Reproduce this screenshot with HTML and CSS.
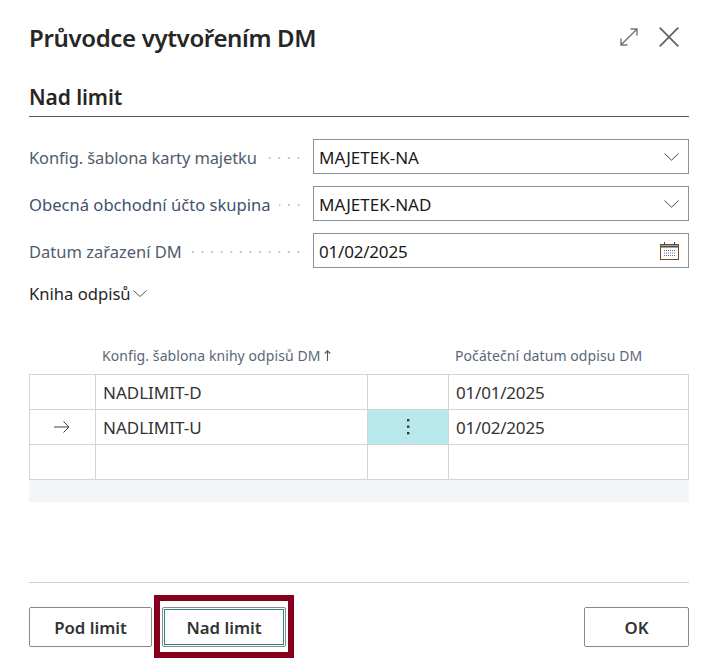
FILE: index.html
```html
<!DOCTYPE html>
<html lang="cs">
<head>
<meta charset="utf-8">
<title>Průvodce vytvořením DM</title>
<link rel="stylesheet" href="styles.css">
</head>
<body>
<main class="dialog">
  <header class="head">
    <h1 class="title">Průvodce vytvořením DM</h1>
    <div class="head-icons">
      <svg class="ico" width="18" height="18" viewBox="0 0 18 18" fill="none" stroke="#757575" stroke-width="1.4"><path d="M.7 17.300 17.300.7M10.500 1H17V7.500M1 10.500V17H7.500"/></svg>
      <svg class="ico" width="20" height="20" viewBox="0 0 20 20" fill="none" stroke="#616161" stroke-width="1.7"><path d="M.7.7 19.300 19.300M19.300.7.7 19.300"/></svg>
    </div>
  </header>
  <h2 class="section">Nad limit</h2>
  <div class="fields">
    <div class="field">
      <span class="label label-tight">Konfig. šablona karty majetku</span><span class="dots"></span>
      <div class="input"><span>MAJETEK-NA</span><svg width="15" height="8" viewBox="0 0 15 8" fill="none" stroke="#3d4a5c" stroke-width="1"><path d="M.5.5 7.500 7.200 14.500.5"/></svg></div>
    </div>
    <div class="field">
      <span class="label label-alt">Obecná obchodní účto skupina</span><span class="dots"></span>
      <div class="input"><span>MAJETEK-NAD</span><svg width="15" height="8" viewBox="0 0 15 8" fill="none" stroke="#3d4a5c" stroke-width="1"><path d="M.5.5 7.500 7.200 14.500.5"/></svg></div>
    </div>
    <div class="field">
      <span class="label">Datum zařazení DM</span><span class="dots"></span>
      <div class="input"><span class="num">01/02/2025</span>
        <svg width="19" height="18" viewBox="0 0 19 18" fill="none"><rect x=".5" y="2.500" width="18" height="15" fill="#fff" stroke="#7a4a1e"/><path d="M1 4.500h17" stroke="#4a4a4a" stroke-width="2"/><path d="M4.500 0v3M14.500 0v3" stroke="#444"/><path d="M4 8.500h12M4 11h12M4 13.500h12" stroke="#5f7390" stroke-dasharray="1 1"/></svg>
      </div>
    </div>
  </div>
  <button class="group" type="button">Kniha odpisů<svg width="14" height="7" viewBox="0 0 14 7" fill="none" stroke="#555" stroke-width="1"><path d="M.5.5 7 6.500 13.500.5"/></svg></button>
  <div class="grid-wrap">
    <div class="grid-head">
      <span class="hc hc-name">Konfig. šablona knihy odpisů DM <svg width="7" height="11" viewBox="0 0 7 11" fill="none" stroke="#4a5568" stroke-width="1.1"><path d="M3.500 11V1M.8 3.500 3.500.8 6.200 3.500"/></svg></span>
      <span class="hc hc-date">Počáteční datum odpisu DM</span>
    </div>
    <div class="grid">
      <div class="cell"></div><div class="cell">NADLIMIT-D</div><div class="cell"></div><div class="cell num">01/01/2025</div>
      <div class="cell cell-arrow"><svg width="16" height="12" viewBox="0 0 16 12" fill="none" stroke="#444" stroke-width="1"><path d="M0 6H15M9.500.5 15 6 9.500 11.500"/></svg></div><div class="cell">NADLIMIT-U</div><div class="cell cell-menu"><svg width="4" height="18" viewBox="0 0 4 18" fill="#2b3a3f"><rect x="1" y="1" width="2.400" height="2.400"/><rect x="1" y="7.500" width="2.400" height="2.400"/><rect x="1" y="14" width="2.400" height="2.400"/></svg></div><div class="cell num">01/02/2025</div>
      <div class="cell"></div><div class="cell"></div><div class="cell"></div><div class="cell"></div>
    </div>
    <div class="band"></div>
  </div>
  <footer class="foot">
    <div class="foot-left">
      <button class="btn btn-pod" type="button">Pod limit</button>
      <div class="mark"><button class="btn btn-nad" type="button">Nad limit</button></div>
    </div>
    <button class="btn btn-ok" type="button">OK</button>
  </footer>
</main>
</body>
</html>
```
FILE: styles.css
```css
* { box-sizing: border-box; }
html, body { margin: 0; background: #fff; }
body { font-family: "Noto Sans", "Open Sans", "Liberation Sans", sans-serif; color: #212121; }
.dialog { width: 715px; height: 671px; padding: 0 26px 0 29px; overflow: hidden; }
.head { height: 76px; display: flex; align-items: center; justify-content: space-between; }
.title { margin: -2px 0 0; font-size: 24px; font-weight: 600; letter-spacing: -.35px; color: #262626; }
.head-icons { display: flex; align-items: center; gap: 21px; margin-right: 10px; margin-top: -2px; }
.section { margin: 0; height: 41px; padding-top: 4px; line-height: 34px; font-size: 21px; font-weight: 600; letter-spacing: -.1px; color: #262626; border-bottom: 1px solid #505c6d; }
.fields { margin-top: 22px; display: flex; flex-direction: column; gap: 12px; }
.field { display: flex; align-items: center; height: 35px; }
.label { padding-top: 2px; font-size: 16.500px; color: #505c6d; white-space: nowrap; }
.label-tight { letter-spacing: -.12px; }
.label-alt { font-size: 16.600px; color: #3f5170; }
.dots { flex: 1; margin: 2px 10px 0 8px; height: 2px; background-image: radial-gradient(circle, #c8c8c8 .8px, transparent 1px); background-size: 9.600px 2px; background-position: right; }
.input { flex: none; width: 376px; height: 35px; padding: 0 9px 0 5px; display: flex; align-items: center; justify-content: space-between; border: 1px solid #8a919c; font-size: 17px; color: #1a1a1a; }
.input span { padding-top: 2px; }
.num { letter-spacing: -.2px; }
.group { display: flex; align-items: center; gap: 2px; margin-top: 13px; padding: 0; height: 24px; border: 0; background: none; font: inherit; font-size: 16.600px; color: #262626; }
.grid-wrap { margin-top: 39px; }
.grid-head { display: flex; height: 30px; align-items: flex-start; font-size: 14px; letter-spacing: .08px; color: #5a6678; }
.hc { display: block; line-height: 24px; white-space: nowrap; }
.hc-name { width: 353px; padding-left: 73px; }
.hc-date { padding-left: 73px; }
.grid { display: grid; grid-template-columns: 66px 272px 81px 240px; grid-auto-rows: 35px; border-top: 1px solid #d4d4d8; border-left: 1px solid #d4d4d8; }
.cell { display: flex; align-items: center; padding: 0 0 0 7px; font-size: 17px; color: #333; border-right: 1px solid #d4d4d8; border-bottom: 1px solid #d4d4d8; }
.cell-arrow { padding: 0 0 0 24px; }
.cell-menu { background: #b8e8ec; padding: 0; justify-content: center; }
.band { height: 22px; background: #f4f5f7; }
.foot { margin-top: 80px; padding-top: 24px; border-top: 1px solid #cfcfcf; display: flex; justify-content: space-between; }
.foot-left { display: flex; gap: 10px; }
.btn { height: 40px; padding: 0; background: #fff; border: 1px solid #8a8a8a; border-radius: 2px; font: inherit; font-size: 16.800px; font-weight: 600; color: #333; }
.btn-pod { width: 123px; }
.btn-nad { width: 124px; display: block; box-shadow: inset 0 0 0 1px #fff, inset 0 0 0 2px #2b8285; }
.btn-ok { width: 105px; }
.mark { position: relative; }
.mark::after { content: ""; position: absolute; inset: -12px -8px -11px -8px; border: 6px solid #85001c; pointer-events: none; }
```
